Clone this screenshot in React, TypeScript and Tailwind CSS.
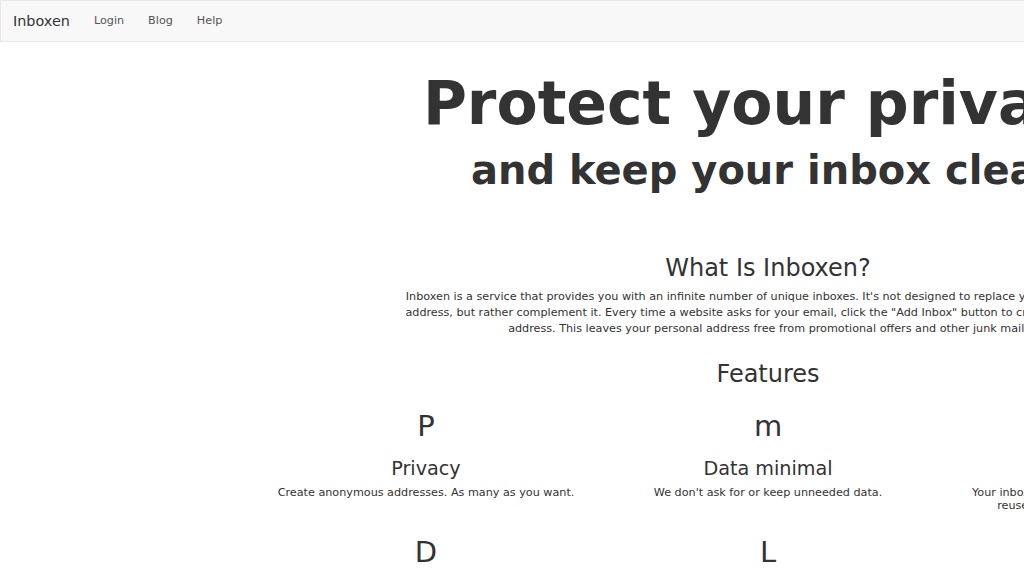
const features = [
  { icon: 'P', title: 'Privacy', text: 'Create anonymous addresses. As many as you want.' },
  { icon: 'm', title: 'Data minimal', text: "We don't ask for or keep unneeded data." },
  { icon: 'U', title: 'Unique', text: "Your inboxes are unique to you, and will never be reused, even after you've deleted them." },
  { icon: 'D', title: 'Delete', text: 'Remove inboxes and emails whenever you like.' },
  { icon: 'L', title: 'Libre', text: 'Inboxen is free software. Run it yourself.' },
  { icon: 'S', title: 'Secure', text: 'Everything is served over HTTPS.' },
]

export default function App() {
  return (
    <div className="w-full h-screen overflow-hidden bg-white text-[#333] font-['DejaVu_Sans',sans-serif]">
      <div className="w-[1536px]">
        <nav className="h-[42px] pt-px bg-[#f8f8f8] border border-[#e7e7e7] flex items-center">
          <span className="ml-[12px] text-[14.4px] text-[#333]">Inboxen</span>
          <ul className="flex ml-[24px] gap-[24px] text-[11.2px] text-[#555]">
            <li>Login</li>
            <li>Blog</li>
            <li>Help</li>
          </ul>
        </nav>

        <main className="text-center">
          <h1 className="mt-[28px] text-[60px] leading-[66px] font-bold">Protect your privacy</h1>
          <h2 className="mt-[10px] text-[40px] leading-[48px] font-bold">and keep your inbox clean</h2>

          <h3 className="mt-[59px] text-[24px] leading-[30px]">What Is Inboxen?</h3>
          <p className="mx-auto mt-[6px] w-[734px] text-[11.2px] leading-[16px]">
            Inboxen is a service that provides you with an infinite number of unique inboxes. It's not designed to
            replace your personal email address, but rather complement it. Every time a website asks for your email,
            click the "Add Inbox" button to create a new unique address. This leaves your personal address free from
            promotional offers and other junk mail.
          </p>

          <h3 className="mt-[22px] text-[24px] leading-[30px]">Features</h3>
          <div className="mx-auto mt-[19px] w-[1026px] grid grid-cols-3">
            {features.map((f) => (
              <div key={f.title} className="px-[15px] h-[126px]">
                <div className="text-[29px] leading-[36px]">{f.icon}</div>
                <div className="mt-[13px] text-[19.2px] leading-[24px]">{f.title}</div>
                <div className="mt-[6px] text-[11.2px] leading-[12.8px]">{f.text}</div>
              </div>
            ))}
          </div>
        </main>
      </div>
    </div>
  )
}
